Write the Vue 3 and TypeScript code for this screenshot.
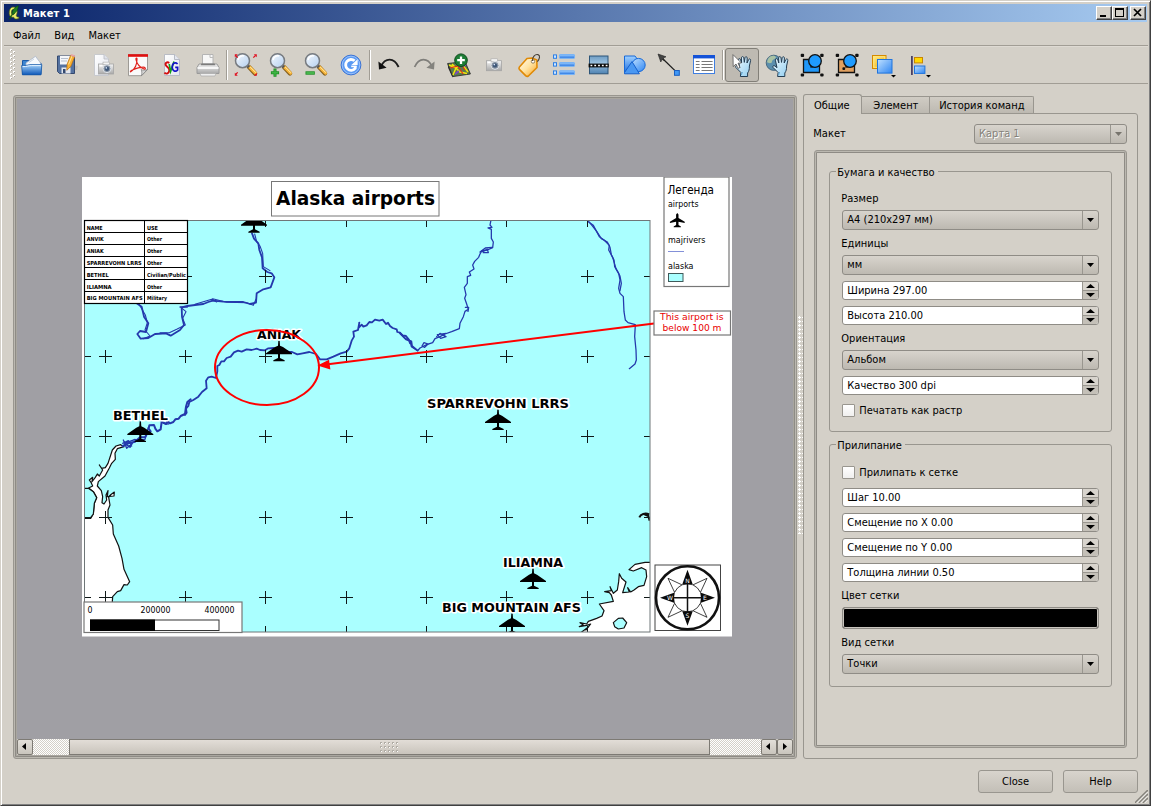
<script setup lang="ts">
interface Plane { x: number; y: number }
interface MapLabel { text: string; x: number; y: number; w: number }

const menus: string[] = ['Файл', 'Вид', 'Макет']

const gridX: number[] = [105.5, 185.5, 265.5, 346.5, 426.5, 506.5, 587.5]
const gridY: number[] = [276.5, 356.5, 436.5, 517.5, 597.5]

const planes: Plane[] = [
  { x: 254, y: 212 },
  { x: 279, y: 340.7 },
  { x: 140.3, y: 421.3 },
  { x: 498, y: 409.3 },
  { x: 533, y: 568.3 },
  { x: 512, y: 613.3 },
]

const mapLabels: MapLabel[] = [
  { text: 'ANIAK', x: 257, y: 339.3, w: 44 },
  { text: 'BETHEL', x: 113, y: 420, w: 55 },
  { text: 'SPARREVOHN LRRS', x: 427, y: 408, w: 142 },
  { text: 'ILIAMNA', x: 503, y: 567, w: 60 },
  { text: 'BIG MOUNTAIN AFS', x: 442, y: 612, w: 139 },
]

const tableLines: number[] = [232.5, 244.5, 256.5, 267.5, 279.5, 291.5]
const tableRows: { name: string; nw: number; use: string; uw: number; y: number }[] = [
  { name: 'NAME', nw: 16, use: 'USE', uw: 11, y: 229.5 },
  { name: 'ANVIK', nw: 17, use: 'Other', uw: 15, y: 241 },
  { name: 'ANIAK', nw: 17, use: 'Other', uw: 15, y: 253 },
  { name: 'SPARREVOHN LRRS', nw: 55, use: 'Other', uw: 15, y: 264.8 },
  { name: 'BETHEL', nw: 22, use: 'Civilian/Public', uw: 39, y: 276.8 },
  { name: 'ILIAMNA', nw: 25, use: 'Other', uw: 15, y: 288.8 },
  { name: 'BIG MOUNTAIN AFS', nw: 56, use: 'Military', uw: 20, y: 300 },
]

const snapFields: string[] = ['Шаг 10.00', 'Смещение по X 0.00', 'Смещение по Y 0.00', 'Толщина линии 0.50']
</script>

<template>
  <div class="window">
    <svg class="defs" width="0" height="0">
      <defs>
        <linearGradient id="gBlue" x1="0" y1="0" x2="0" y2="1"><stop offset="0" stop-color="#9fd0ff" /><stop offset="1" stop-color="#1f6fe0" /></linearGradient>
        <linearGradient id="gBlueD" x1="0" y1="0" x2="1" y2="1"><stop offset="0" stop-color="#bfe0ff" /><stop offset="1" stop-color="#2f86f2" /></linearGradient>
        <linearGradient id="gFolder" x1="0" y1="0" x2="0" y2="1"><stop offset="0" stop-color="#a5d2fa" /><stop offset="1" stop-color="#0d57b8" /></linearGradient>
        <linearGradient id="gPaper" x1="0" y1="0" x2="1" y2="1"><stop offset="0" stop-color="#ffffff" /><stop offset="1" stop-color="#e3e6ee" /></linearGradient>
        <linearGradient id="gGrey" x1="0" y1="0" x2="0" y2="1"><stop offset="0" stop-color="#f4f4f4" /><stop offset="1" stop-color="#a8a8a8" /></linearGradient>
        <linearGradient id="gLens" x1="0" y1="0" x2="1" y2="1"><stop offset="0" stop-color="#f4f9ff" /><stop offset="1" stop-color="#b4cfee" /></linearGradient>
        <linearGradient id="gYellow" x1="0" y1="0" x2="1" y2="1"><stop offset="0" stop-color="#fff08a" /><stop offset="1" stop-color="#f0a400" /></linearGradient>
        <linearGradient id="gTag" x1="0" y1="0" x2="1" y2="1"><stop offset="0" stop-color="#fffdf2" /><stop offset=".5" stop-color="#ffe3a2" /><stop offset="1" stop-color="#f9a21b" /></linearGradient>
        <linearGradient id="gSteel" x1="0" y1="0" x2="0" y2="1"><stop offset="0" stop-color="#6f9dc4" /><stop offset=".4" stop-color="#9ac0de" /><stop offset="1" stop-color="#4f83b2" /></linearGradient>
        <linearGradient id="gHand" x1="0" y1="0" x2="1" y2="1"><stop offset="0" stop-color="#f2fbff" /><stop offset="1" stop-color="#8fcdf0" /></linearGradient>
        <g id="lens">
          <path d="M17 15 L23 21.4" stroke="#8a6320" stroke-width="4.4" stroke-linecap="round" />
          <path d="M17.5 15 L23.4 21" stroke="#f7b53a" stroke-width="3.2" stroke-linecap="round" />
          <path d="M18 14.8 L24 20.8" stroke="#ffe9a8" stroke-width="1" />
          <path d="M14.8 13 L17 15.2" stroke="#555" stroke-width="3" />
          <circle cx="10.5" cy="8.7" r="7" fill="url(#gLens)" stroke="#777b80" stroke-width="1.5" />
          <path d="M6 8 a5 5 0 0 1 6 -4" fill="none" stroke="#fff" stroke-width="1.5" />
        </g>
        <g id="camera">
          <rect x=".5" y="2.5" width="15" height="10" fill="url(#gGrey)" stroke="#a5a5a5" stroke-width=".8" />
          <rect x="5" y=".6" width="6.5" height="2.6" fill="#f4f4f4" stroke="#aaa" stroke-width=".6" />
          <rect x="1.5" y="3.5" width="3" height="1.5" fill="#fff" />
          <circle cx="9" cy="7.2" r="4" fill="#8894a3" stroke="#dfe3e8" stroke-width="1" />
          <circle cx="9" cy="7.2" r="2.2" fill="#3f587a" /><circle cx="8.3" cy="6.4" r=".8" fill="#dceaff" />
        </g>
        <g id="hand">
          <path d="M9 24.5 L9.5 20.5 L4.5 15.5 C3.6 14.2 5.2 13 6.4 14 L8.4 15.7 L6.8 8.2 C6.6 6.4 8.7 6.1 9.2 7.8 L10.2 11 L10 5.8 C10.2 4.2 12.2 4.2 12.4 5.8 L12.9 10.4 L13.6 5.6 C14 4.2 15.8 4.6 15.8 6 L15.6 11 L17.2 7.6 C17.9 6.3 19.6 7 19.2 8.4 L18 14 C18 17.5 17.6 19 16.2 21 V24.5Z" fill="url(#gHand)" stroke="#233c52" stroke-width="1" stroke-linejoin="round" />
          <path d="M10 23 L11 20" stroke="#5fa8d6" stroke-width="1" />
        </g>
        <path id="drop" d="M0 0 H5 L2.5 2.6Z" fill="#000" />
        <g id="handles" fill="#111"><rect x="1.7" y="1.8" width="3.4" height="3.2" rx="1" /><rect x="21.2" y="1.8" width="3.4" height="3.2" rx="1" /><rect x="1.7" y="21.4" width="3.4" height="3.2" rx="1" /><rect x="21.2" y="21.4" width="3.4" height="3.2" rx="1" /></g>
        <path id="plane" d="M-2 0H2L3 15L12 19L39 38V41H3V52L17 59V62H-17V59L-3 52V41H-39V38L-12 19L-3 15Z" transform="scale(.3333)" />
      </defs>
    </svg>

    <header class="titlebar">
      <svg class="logo" width="16" height="16" viewBox="0 0 16 16">
        <path d="M6 2 C1.5 2 .8 12 5 12.3 L6.6 12.2 C7.5 14 9 14.6 11.8 13.6 L12 12 C10.5 12.4 9.8 11.8 9.3 10.5 C11 7 10.5 2 6 2Z M6 4.5 C8 4.5 8 9.8 6 9.8 C4 9.8 4 4.5 6 4.5Z" fill="#e9ee6a" fill-rule="evenodd" stroke="#4b5a12" stroke-width=".7" />
        <path d="M2 14 L5 9 C5 5 8 2 11.5 .6 C10.8 3 11.2 5.5 7.5 8.5 L5.5 9.6 L3 14Z" fill="#1e7d1e" stroke="#0b3f10" stroke-width=".5" />
      </svg>
      <span class="title">Макет 1</span>
      <div class="winbtns">
        <i class="wb"><svg width="13" height="11"><rect x="3" y="8" width="6" height="2" /></svg></i>
        <i class="wb"><svg width="13" height="11"><path d="M2 1H11V10H2ZM3 3V9H10V3Z" fill-rule="evenodd" /></svg></i>
        <i class="wb close"><svg width="13" height="11"><path d="M3 2 L10 9 M10 2 L3 9" stroke="#000" stroke-width="1.7" /></svg></i>
      </div>
    </header>

    <nav class="menubar"><span v-for="m in menus" :key="m">{{ m }}</span></nav>

    <div class="toolbar">
      <svg class="grip" width="8" height="32" viewBox="0 0 8 32">
        <g v-for="n in 8" :key="n"><rect x="0" :y="n * 4 - 4" width="2" height="2" fill="#fff" /><rect x="1" :y="n * 4 - 3" width="1" height="1" fill="#aaa69e" /><rect v-if="n < 8" x="3" :y="n * 4 - 2" width="2" height="2" fill="#fff" /><rect v-if="n < 8" x="4" :y="n * 4 - 1" width="1" height="1" fill="#aaa69e" /></g>
      </svg>
      <div class="tools">
        <i class="tool"><svg viewBox="0 0 26 26">
          <path d="M2.5 8.5 H9 L10.5 11 H21 V22.5 H2.5Z" fill="#3d85d0" stroke="#1b5aa8" />
          <path d="M6 11 L15.5 4.3 L20.5 11 V14 H6Z" fill="#f7f9fc" stroke="#a7b4c6" stroke-width=".8" />
          <path d="M9 10.5 L14 7" stroke="#c9d4e2" />
          <path d="M1.6 13.6 C7 13.8 8 12.6 11 12.6 H21.8 L21 22.8 H2.4Z" fill="url(#gFolder)" stroke="#1b5aa8" stroke-width=".8" />
          <path d="M2.6 14.6 C7 14.8 8.5 13.6 11.3 13.6 H20.8" stroke="#e2f1ff" fill="none" />
        </svg></i>
        <i class="tool"><svg viewBox="0 0 26 26">
          <path d="M17 13 l6 1 -1 4 -5 0z" fill="#b9b4ab" opacity=".6" />
          <path d="M2.5 4 H19.5 V21.5 H4.5 L2.5 19.5Z" fill="#5572a0" stroke="#34496f" />
          <rect x="5" y="4" width="12" height="8.5" fill="#f4f6fa" /><path d="M6 6.5H13M6 9H12" stroke="#b6bfce" />
          <rect x="6.5" y="15.5" width="9" height="6" fill="#e4e7ee" /><rect x="8" y="17" width="2.5" height="4" fill="#34496f" />
          <path d="M12 12.5 L15.6 3.4 L19.6 5 L15.8 14.4 L11.8 18.3Z" fill="#f9b233" stroke="#b76a0a" stroke-width=".7" />
          <path d="M13.6 12.4 L17 4" stroke="#ffe29a" /><path d="M15.5 3.6 L16.3 2 L20.2 3.6 L19.6 5.2Z" fill="#e9a3a3" />
        </svg></i>
        <i class="tool"><svg viewBox="0 0 26 26">
          <path d="M4.5 2.5 H14 L18.5 7 V23.5 H4.5Z" fill="url(#gPaper)" stroke="#c4c6cc" stroke-width=".9" /><path d="M14 2.5 V7 H18.5" fill="#dfe2ea" stroke="#b8bac0" stroke-width=".8" />
          <use href="#camera" x="8" y="9.5" />
        </svg></i>
        <i class="tool"><svg viewBox="0 0 26 26">
          <path d="M3.5 2.5 H22.5 V17.5 L16.5 23.7 H3.5Z" fill="#fafafa" stroke="#9d9a95" />
          <path d="M16.5 23.7 C17 21 17 19 16 17.6 C18.5 18.4 20.5 18.3 22.5 17.5Z" fill="#d4d4d4" stroke="#777" stroke-width=".7" />
          <rect x="3" y="2.2" width="20" height="2.6" fill="#e01010" />
          <path d="M6 19.5 C10 17 12 12 12 7 C12 5.6 10.6 6 11 7.6 C12 12 15 15.4 19 17 C21 17.4 20.6 15.2 18.6 15.2 C14 15.2 10 16.8 6.8 18.2 C5 19 5.2 20.6 6 19.5Z" fill="none" stroke="#e0201a" stroke-width="1.2" />
        </svg></i>
        <i class="tool"><svg viewBox="0 0 26 26">
          <path d="M4.5 2.5 H14.5 L19.5 7.5 V23.5 H4.5Z" fill="url(#gPaper)" stroke="#b3b7c2" stroke-width=".9" /><path d="M14.5 2.5 V7.5 H19.5" fill="#e4e7f0" stroke="#a9adb9" stroke-width=".8" />
          <path d="M9.2 11 C7 9.2 4.6 11.4 6 13.6 C7 15.2 9.6 15.6 9.3 18.4 C9 21.4 6.4 22.6 4.4 20.6" fill="none" stroke="#d40c0c" stroke-width="1.9" />
          <path d="M9.2 12 L10.6 19.5 L14 9.5" fill="none" stroke="#14a01c" stroke-width="1.7" />
          <path d="M17.6 12 C15 9.4 12.2 11.6 12.2 15 C12.2 19 15.6 20.4 17.6 18 V15.4 H15.2" fill="none" stroke="#1414c8" stroke-width="1.7" />
        </svg></i>
        <i class="tool"><svg viewBox="0 0 26 26">
          <path d="M7.5 13 V2.5 H18 V13Z" fill="#f7f7f7" stroke="#b4b4b4" /><path d="M15 2.5 v3 h3" fill="none" stroke="#bbb" />
          <path d="M4 12 H22 L24 15.5 V21.5 H2 V15.5Z" fill="url(#gGrey)" stroke="#9a9a9a" /><path d="M6.5 11.5 H19.5 L20.3 13.2 H5.7Z" fill="#7c7c7c" />
          <path d="M2.5 16 H23.5" stroke="#fff" stroke-width="1.6" /><path d="M5 21.5 H21 L20 24 H6Z" fill="#efefef" stroke="#aaa" stroke-width=".7" />
        </svg></i>
      </div>
      <b class="sep" />
      <div class="tools">
        <i class="tool"><svg viewBox="0 0 26 26"><use href="#lens" /><g stroke="#e01020" fill="#e01020"><path d="M3.5 3.5 l2.2 2.2M23.5 3.5 l-2.2 2.2M3.5 22.5 l2.2-2.2" stroke-width="1.2" /><path d="M2.8 2.2 h3l-3 3zM24.8 2.2 h-3l3 3zM2.8 23.8v-3l3 3zM24.8 23.8v-3l-3 3z" stroke="none" /></g></svg></i>
        <i class="tool"><svg viewBox="0 0 26 26"><use href="#lens" /><path d="M8 16.6 V24.8 M3.9 20.7 H12.1" stroke="#1f8f25" stroke-width="3" /><path d="M8 17.4 V24 M4.7 20.7 H11.3" stroke="#3eb544" stroke-width="1.4" /></svg></i>
        <i class="tool"><svg viewBox="0 0 26 26"><use href="#lens" /><path d="M3.5 21 H12.8" stroke="#1f8f25" stroke-width="3.4" /><path d="M4.3 21 H12" stroke="#4fbf55" stroke-width="1.6" /></svg></i>
        <i class="tool"><svg viewBox="0 0 26 26"><circle cx="14" cy="13" r="9.9" fill="#5b9af3" stroke="#3a72d4" /><circle cx="14" cy="13" r="8.8" fill="none" stroke="#a9ccfb" stroke-width=".8" /><path d="M17.6 8.8 A5.4 5.4 0 1 0 18.2 16.4 V14" fill="none" stroke="#fff" stroke-width="2.8" /><path d="M20.6 7.2 V13 H14.4Z" fill="#fff" /><path d="M14.2 14.4 H19.6" stroke="#fff" stroke-width="1.6" /></svg></i>
      </div>
      <b class="sep wide" />
      <div class="tools">
        <i class="tool"><svg viewBox="0 0 26 26"><path d="M5 14.5 C9 5.5 18 5 22.6 15" fill="none" stroke="#1c1c1c" stroke-width="1.9" /><path d="M2.4 9.6 L3 17.4 L10.6 15.8Z" fill="#111" /></svg></i>
        <i class="tool"><svg viewBox="0 0 26 26"><path d="M21 14.5 C17 5.5 8 5 3.6 15" fill="none" stroke="#7f7e7a" stroke-width="1.7" /><path d="M23.6 9.6 L23 17.4 L15.4 15.8Z" fill="#84837e" /></svg></i>
        <i class="tool"><svg viewBox="0 0 26 26">
          <path d="M1.6 11.5 L19 9.6 L24.4 22 L6.8 24.6Z" fill="#5a7a4e" stroke="#222" stroke-width=".8" /><path d="M6.8 24.6 L1.6 11.5 L2.2 16 L6.5 25.5Z" fill="#222" />
          <path d="M3 13 L10 16 L7 23 M10 16 L16 12 L22 20 M6 12 L14 20 L21 21.5" fill="none" stroke="#f2e60a" stroke-width="1.5" /><path d="M4 16 L12 14 L17 22 M14 10.5 L19 18" fill="none" stroke="#e0301c" stroke-width="1.2" /><path d="M9 22 l4 -3M17 14l3-1" stroke="#7d4bc0" stroke-width="1.6" />
          <circle cx="15" cy="8.2" r="6.3" fill="#1d7d36" stroke="#0c4b1b" /><path d="M15 4.4 V12 M11.2 8.2 H18.8" stroke="#fff" stroke-width="2.3" />
        </svg></i>
        <i class="tool"><svg viewBox="0 0 26 26"><use href="#camera" x="5" y="6.2" /></svg></i>
        <i class="tool"><svg viewBox="0 0 26 26"><path d="M16 6 L20.8 8 L21 15.5 L12.4 24 C11.4 24.6 10.4 24.4 9.6 23.6 L3.4 17.4 C2.8 16.6 2.8 15.8 3.4 15 L11 6.5Z" fill="url(#gTag)" stroke="#e08a06" stroke-width="1.6" stroke-linejoin="round" /><circle cx="17" cy="9.5" r="1.7" fill="#fff" stroke="#7b6540" stroke-width=".8" /><path d="M16.6 9 C16 5 19 2 22 2.6 C24.6 3.4 23.6 7 21.4 9.6" fill="none" stroke="#463f36" stroke-width="1.1" /></svg></i>
        <i class="tool"><svg viewBox="0 0 26 26"><g fill="#cfe6ff" stroke="#2b7fe6"><rect x="2.5" y="2.9" width="3" height="3.4" /><rect x="2.5" y="10.7" width="3" height="3.4" /><rect x="2.5" y="18.9" width="3" height="3.4" /><rect x="8.5" y="2.5" width="15" height="3.8" rx=".6" fill="url(#gBlue)" stroke="#79b4f6" /><rect x="8.5" y="10.5" width="15" height="3.8" rx=".6" fill="url(#gBlue)" stroke="#79b4f6" /><rect x="8.5" y="18.7" width="15" height="3.8" rx=".6" fill="url(#gBlue)" stroke="#79b4f6" /></g></svg></i>
        <i class="tool"><svg viewBox="0 0 26 26"><rect x="3.5" y="4" width="18.5" height="17.8" fill="url(#gSteel)" stroke="#2d5578" /><rect x="2.6" y="11.6" width="20.2" height="3.8" fill="#0b0b0b" /><path d="M4.5 13.5 H22" stroke="#fff" stroke-width="1.6" stroke-dasharray="1.8 2" /></svg></i>
        <i class="tool"><svg viewBox="0 0 26 26"><path d="M3.5 4 H14 L20 12 V12 L17 20.5 H3.5Z" fill="url(#gBlue)" stroke="#1769d8" /><circle cx="17.6" cy="13" r="6.6" fill="url(#gBlueD)" stroke="#1769d8" /><path d="M3.5 20.5 L11 9.6 L18.4 21.8 H3.5Z" fill="#4a98f2" stroke="#1560cc" stroke-linejoin="round" /></svg></i>
        <i class="tool"><svg viewBox="0 0 26 26"><path d="M5.5 5.5 L20 19.6" stroke="#1c1c1c" stroke-width="1.3" /><path d="M2 2 L10 4.8 L7.2 6 L8 8.4 L5.9 7.4 L4.8 10Z" fill="#444" stroke="#222" stroke-width=".6" /><rect x="18.5" y="18.5" width="4.8" height="4.8" fill="#3f97f5" stroke="#1a5fc0" /></svg></i>
        <i class="tool"><svg viewBox="0 0 26 26"><rect x="2.5" y="3.5" width="21" height="18" fill="#fff" stroke="#3f7ee0" /><rect x="2" y="3" width="22" height="3.4" fill="#1452d8" /><path d="M4.8 9.5H8.6M4.8 12.5H8.6M4.8 15.5H8.6M4.8 18.5H8.6M10.5 9.5H21.6M10.5 12.5H21.6M10.5 15.5H21.6M10.5 18.5H21.6" stroke="#787878" /></svg></i>
      </div>
      <b class="sep last" />
      <div class="tools">
        <i class="tool active"><svg viewBox="0 0 26 26"><use href="#hand" x="2.4" /><path d="M4 2.6 L4.2 14.6 L7 12 L9 16.4 L11 15.4 L9 11.2 L12.4 11Z" fill="#fff" stroke="#555" stroke-width=".8" /></svg></i>
        <i class="tool"><svg viewBox="0 0 26 26"><circle cx="9.8" cy="10.8" r="7.6" fill="#5b8fae" stroke="#4a6a80" /><path d="M4 7 C6 3.6 10 3 12 5 C11 8 8 7 8 10 C7 12 4 11 3 10Z M13 12 l4 -4 v6z" fill="#a9c2a4" /><use href="#hand" x="4.6" /></svg></i>
        <i class="tool"><svg viewBox="0 0 26 26"><path d="M4.5 7.5 H12 V15 L20.5 14 V20.5 H4.5Z" fill="#1f97f8" stroke="#111" stroke-width="1.3" /><circle cx="16" cy="9" r="6.3" fill="#1f9bff" stroke="#111" stroke-width="1.3" /><use href="#handles" /></svg></i>
        <i class="tool"><svg viewBox="0 0 26 26"><path d="M4.5 7.5 H12 V15 L20.5 14 V20.5 H4.5Z" fill="#e0a060" stroke="#111" stroke-width="1.3" /><circle cx="16" cy="9" r="6.3" fill="#1f9bff" stroke="#111" stroke-width="1.3" /><rect x="8.4" y="15.2" width="2.8" height="2.8" rx="1" fill="#111" /><use href="#handles" /></svg></i>
        <i class="tool"><svg viewBox="0 0 26 26"><rect x="3.5" y="3.5" width="13.5" height="13" fill="url(#gYellow)" stroke="#d48a00" /><rect x="4.8" y="4.8" width="11" height="10.5" fill="none" stroke="#ffe680" /><rect x="8.5" y="7.5" width="14.5" height="13.6" fill="url(#gBlueD)" stroke="#1f74dd" /><use href="#drop" x="22" y="23" /></svg></i>
        <i class="tool"><svg viewBox="0 0 26 26"><rect x="7" y="4" width="1.8" height="19" fill="#4a4063" /><rect x="10.5" y="5.5" width="8" height="5.4" fill="#ffd800" stroke="#c98500" /><rect x="10.5" y="14" width="10.4" height="7.4" fill="url(#gBlueD)" stroke="#1f74dd" /><use href="#drop" x="22" y="23" /></svg></i>
      </div>
    </div>

    <main class="body">
      <section class="canvas">
        <div class="viewport">
          <svg class="paper" width="651" height="460" viewBox="82 177 651 460">
            <defs>
              <clipPath id="mapClip"><rect x="85" y="221" width="565" height="411" /></clipPath>
            </defs>
            <rect x="82" y="177" width="650" height="459.5" fill="#fff" />
            <g clip-path="url(#mapClip)">
              <rect x="85" y="221" width="565" height="411" fill="#aff" />

              <g transform="translate(80 400) scale(.33333)" fill="#fff" stroke="#111" stroke-width="3.6" stroke-linejoin="round">
                <path d="M38 258 L33 247 L28 240 L38 232 L36 245 L46 232 L52 222 L58 228 L68 210 L58 195 L65 205 L76 203 L84 190 L97 150 L108 138 L122 134 L132 140 L112 146 L105 160 L106 178 L95 190 L88 204 L75 228 L55 245 L52 258 L64 272 L68 290 L66 308 L72 312 L80 300 L78 285 L84 272 L82 290 L102 288 L103 276 L92 284 L86 292 L90 315 L84 330 L84 352 L98 375 L100 402 L116 438 L126 475 L132 508 L149 545 L142 555 L132 554 L122 572 L112 575 L98 590 L96 620 L0 620 V355 H32 L40 342 L43 310 L50 293 L40 275 L26 264Z" />
                <path d="M0 355 H30 L40 342 L43 310 L50 293 L40 275 L25 265 L10 265 L0 255Z" fill="#aff" />
              </g>
              <g transform="translate(400 400) scale(.33333)" fill="#fff" stroke="#111" stroke-width="3.6" stroke-linejoin="round">
                <path d="M1060 486 L735 487 L705 493 L687 509 L700 513 L725 503 L738 510 L740 530 L732 556 L715 560 L702 570 L692 576 L683 563 L688 576 L668 578 L678 546 L665 535 L658 521 L656 545 L652 570 L640 580 L630 560 L634 572 L614 575 L628 578 L634 585 L640 604 L598 612 L612 632 L606 648 L590 655 L565 664 L560 672 L540 668 L550 675 L538 680 L560 676 L572 672 L558 690 L566 680 L540 700 H1060Z" />
                <path d="M640 668 L655 655 L668 654 L680 668 L672 684 L655 687 L644 680Z" fill="#aff" />
                <path d="M718 352 C722 342 735 338 748 343 M732 342 L745 348 L749 362" fill="none" stroke-width="6" />
              </g>

              <g fill="none" stroke="#2438ac" stroke-linejoin="round" stroke-linecap="round">
                <g transform="translate(80 170) scale(.33333)" stroke-width="5.4">
                  <path d="M516 190 L522 206 L535 220 L538 240 L546 262 L548 295 L562 306 L575 310 L583 322 L572 352 L550 358 L530 370 L528 398 L510 402 L490 396 L430 395 L398 392 L385 396 L370 402 L345 405 L322 408 L305 412 L306 440 L312 465 L300 480 L272 497 L258 490 L225 492 L205 504 L182 506 L172 492 L180 483 L198 486 L205 460 L192 440 L185 410 L170 400" />
                  <path d="M524 192 L530 215 L540 228 L548 250 L550 290 L570 302 M398 386 L440 397 L500 398 L520 406 L528 388 M300 412 L322 412 L300 410 L318 425 L308 445 L316 465 L290 478 L268 488 L240 488 M178 404 L196 435 L202 458 L195 480 L210 498 L190 506 M345 403 L395 388 L410 396" stroke-width="3.2" />
                  <path d="M990 520 L986 508 L978 498 L968 496 L960 488 L952 486 L950 478 L938 474 L930 468 L924 458 L918 462 L908 449 L898 452 L885 449 L876 457 L868 456 L860 466 L850 470 L845 464 L835 474 L838 458 L834 480 L820 485 L822 500 L815 512 L808 535 L800 545 L782 550 L760 560 L740 568 L720 568 L708 552 L688 546 L668 550 L652 553 L636 546 L625 545 L608 540 L590 540 L582 534 L565 535 L555 541 L540 540 L530 536 L515 540 L500 538 L485 545 L474 542 L462 547 L452 560 L440 564 L432 574 L424 574 L418 585 L412 588 L412 604 L408 624 L395 620 L385 622 L378 632 L380 655 L366 666 L355 680 L340 690 L328 696 L325 708 L318 716 L320 728 L315 735" />
                </g>
                <g transform="translate(80 400) scale(.33333)" stroke-width="6">
                  <path d="M332 -2 L322 6 L318 20 L315 42 L302 48 L296 56 L286 58 L280 66 L270 70 L262 64 L258 72 L245 65 L242 88 L232 94 L226 86 L222 75 L208 76 L206 86 L212 94 L202 100 L195 112 L180 112 L165 125 L145 130 L128 138" />
                  <path d="M130 120 L140 145 L158 128 L150 142 L134 130 L165 118 M128 130 L145 122 L155 138 M160 120 L195 118 L205 82 M250 70 L265 72" stroke-width="4" />
                </g>
                <g transform="translate(400 170) scale(.33333)" stroke-width="3.8">
                  <path d="M273 150 L270 165 L276 172 L264 174 L274 178 L274 205 L280 216 L278 233 L262 240 L246 242 L240 252 L236 262 L224 274 L218 285 L222 297 L208 306 L212 316 L202 320 L202 340 L193 352 L198 374 L194 385 L200 402 L205 418 L195 424 L190 440 L180 460 L178 476 L155 485 L135 492 L120 500 L105 506 L98 518 L80 524 L60 534 L53 542 L34 530 L30 512 L15 505 L0 488" />
                  <path d="M248 245 L262 238 L265 248 L250 248 M110 500 L120 490 L138 500 L122 505 L112 494 L138 490 M66 528 L72 518 L84 522 L74 532Z M196 412 L206 412 L204 424 M276 232 L256 234 L240 246" />
                  <path d="M53 542 L36 528 L34 514 L18 508 L0 490" stroke-width="5.4" />
                  <path d="M562 150 L574 164 L590 184 L604 206 L622 216 L630 232 L634 254 L642 270 L644 290 L656 310 L660 330 L656 355 L660 370 L670 380 L672 425 L676 450 L684 458 L706 464 L704 500 L708 540 L709 570 L705 582 L688 596" />
                  <path d="M566 156 L580 166 L598 200 L612 210 L628 226 L626 240 L638 262 L648 296 L660 318 L664 340 L660 362" />
                </g>
              </g>

              <g stroke="#101818" stroke-width="1" shape-rendering="crispEdges">
                <template v-for="gx in gridX" :key="'x' + gx">
                  <path v-for="gy in gridY" :key="gy" :d="`M${gx - 6.5} ${gy}h13M${gx} ${gy - 6.5}v13`" />
                  <path :d="`M${gx} 221v6M${gx} 626v7`" />
                </template>
                <path v-for="gy in gridY" :key="'y' + gy" :d="`M85 ${gy}h6M643.5 ${gy}h7`" />
              </g>
              <use v-for="(p, i) in planes" :key="i" href="#plane" :transform="`translate(${p.x} ${p.y})`" />
            </g>
            <rect x="84.5" y="220.5" width="565.5" height="411.5" fill="none" stroke="#6f7678" />

            <g class="maplabel">
              <text v-for="l in mapLabels" :key="l.text" :x="l.x" :y="l.y" :textLength="l.w" lengthAdjust="spacingAndGlyphs">{{ l.text }}</text>
            </g>

            <g fill="none" stroke="#f00" stroke-width="2">
              <ellipse cx="267" cy="367.5" rx="52" ry="37.5" />
              <path d="M326 364.5 L654 323.5" />
            </g>
            <path d="M317.5 365.5 L329 359.8 L330.4 369.6Z" fill="#f00" />

            <rect x="271.5" y="181.5" width="167.5" height="34.5" fill="#fff" stroke="#777" />
            <text class="sans title-text" x="276" y="204.5" textLength="159" lengthAdjust="spacingAndGlyphs">Alaska airports</text>

            <g>
              <rect x="84.5" y="220.5" width="103" height="83" fill="#fff" stroke="#000" stroke-width="1.2" />
              <path v-for="ly in tableLines" :key="ly" :d="`M84 ${ly}H188`" stroke="#000" />
              <path d="M144.5 220V304" stroke="#000" />
              <g class="tiny">
                <template v-for="r in tableRows" :key="r.name">
                  <text x="86.7" :y="r.y" :textLength="r.nw" lengthAdjust="spacingAndGlyphs">{{ r.name }}</text>
                  <text x="147" :y="r.y" :textLength="r.uw" lengthAdjust="spacingAndGlyphs">{{ r.use }}</text>
                </template>
              </g>
            </g>

            <g class="sans">
              <rect x="664" y="177" width="65" height="109.5" fill="#fff" stroke="#777" stroke-width="1.2" />
              <text x="667.5" y="194" font-size="12" textLength="46.5" lengthAdjust="spacingAndGlyphs">Легенда</text>
              <text x="668" y="207" font-size="9" textLength="30.5" lengthAdjust="spacingAndGlyphs">airports</text>
              <path d="M0 -7.4 L1.2 -6 V-2.4 L7.4 1.2 V2.6 L1.2 1.2 V4.6 L3.6 6 V6.8 H-3.6 V6 L-1.2 4.6 V1.2 L-7.4 2.6 V1.2 L-1.2 -2.4 V-6Z" transform="translate(677.3 220.5)" />
              <text x="668" y="243" font-size="9" textLength="37.5" lengthAdjust="spacingAndGlyphs">majrivers</text>
              <path d="M668 251.5H684" stroke="#8390d8" />
              <text x="668" y="269" font-size="9" textLength="25.5" lengthAdjust="spacingAndGlyphs">alaska</text>
              <rect x="668.5" y="273.5" width="14.5" height="8" fill="#aff" stroke="#405a5a" />
            </g>

            <g class="sans" fill="#e80000">
              <rect x="654" y="311" width="76.5" height="24" fill="#fff" stroke="#777" stroke-width="1.2" />
              <text x="660" y="320" font-size="9" textLength="63.5" lengthAdjust="spacingAndGlyphs">This airport is</text>
              <text x="662.5" y="331" font-size="9" textLength="59" lengthAdjust="spacingAndGlyphs">below 100 m</text>
            </g>

            <g class="sans">
              <rect x="84" y="602" width="158" height="30.5" fill="#fff" stroke="#777" stroke-width="1.2" />
              <text x="87.5" y="613" font-size="9" textLength="5" lengthAdjust="spacingAndGlyphs">0</text>
              <text x="140.5" y="613" font-size="9" textLength="30" lengthAdjust="spacingAndGlyphs">200000</text>
              <text x="204.5" y="613" font-size="9" textLength="30" lengthAdjust="spacingAndGlyphs">400000</text>
              <rect x="90.5" y="620" width="128.5" height="10.5" fill="#fff" stroke="#333" />
              <rect x="90" y="619.5" width="65" height="11.5" />
            </g>

            <g>
              <rect x="655" y="565" width="65.5" height="65.5" fill="#fff" stroke="#444" />
              <g transform="translate(687.5 597.8)" fill="#fff" stroke="#111">
                <circle r="31.5" stroke-width="2.6" />
                <path d="M-19.5 -19.5 L-5.6 -13 L-13 -5.6Z M19.5 -19.5 L5.6 -13 L13 -5.6Z M-19.5 19.5 L-5.6 13 L-13 5.6Z M19.5 19.5 L5.6 13 L13 5.6Z" stroke-width=".8" />
                <circle r="14" stroke-width=".8" />
                <path d="M0 -28 L5.2 -13.5 H-5.2Z M0 28 L5.2 13.5 H-5.2Z M-27.5 0 L-13.5 -5 V5Z M27.5 0 L13.5 -5 V5Z" fill="#0a0a0a" stroke="none" />
                <path d="M0 -15V15M-15 0H15" stroke-width="1.5" />
                <g class="rose"><text x="0" y="-14.8">N</text><text x="0" y="20.6">S</text><text x="-17.5" y="2.6">W</text><text x="17.5" y="2.6">E</text></g>
              </g>
            </g>
          </svg>
        </div>
        <div class="hscroll">
          <i class="sb"><svg width="16" height="16"><path d="M5 7.5 L9 4 V11Z" /></svg></i>
          <i class="track first" /><i class="thumb"><svg width="19" height="11"><g v-for="r in 3" :key="r"><g v-for="c in 5" :key="c"><rect :x="c * 4 - 4" :y="r * 4 - 4" width="2" height="2" fill="#b0aca4" /><rect :x="c * 4 - 3" :y="r * 4 - 3" width="1" height="1" fill="#fff" /></g></g></svg></i><i class="track second" />
          <i class="sb"><svg width="16" height="16"><path d="M5 7.5 L9 4 V11Z" /></svg></i>
          <i class="sb"><svg width="16" height="16"><path d="M10 7.5 L6 4 V11Z" /></svg></i>
        </div>
      </section>
      <div class="splitter" />
      <aside class="side">
        <div class="tabs"><span class="tab on">Общие</span><span class="tab t2">Элемент</span><span class="tab t3">История команд</span></div>
        <div class="pane">
          <div class="row"><label>Макет</label>
            <div class="combo disabled"><span>Карта 1</span><i><svg width="7" height="4"><path d="M0 0H7L3.5 4Z" /></svg></i></div>
          </div>
          <div class="scrollarea">
            <fieldset class="group g1">
              <span class="legend">Бумага и качество</span>
              <label class="lb">Размер</label>
              <div class="combo"><span class="size">A4 (210x297 мм)</span><i><svg width="7" height="4"><path d="M0 0H7L3.5 4Z" /></svg></i></div>
              <label class="lb">Единицы</label>
              <div class="combo"><span>мм</span><i><svg width="7" height="4"><path d="M0 0H7L3.5 4Z" /></svg></i></div>
              <div v-for="t in ['Ширина 297.00', 'Высота 210.00']" :key="t" class="spin"><span>{{ t }}</span><i><svg width="9" height="4"><path d="M0 4H9L4.5 0Z" /></svg><svg width="9" height="4"><path d="M0 0H9L4.5 4Z" /></svg></i></div>
              <label class="lb">Ориентация</label>
              <div class="combo"><span>Альбом</span><i><svg width="7" height="4"><path d="M0 0H7L3.5 4Z" /></svg></i></div>
              <div class="spin"><span>Качество 300 dpi</span><i><svg width="9" height="4"><path d="M0 4H9L4.5 0Z" /></svg><svg width="9" height="4"><path d="M0 0H9L4.5 4Z" /></svg></i></div>
              <div class="check"><i /><span>Печатать как растр</span></div>
            </fieldset>
            <fieldset class="group g2">
              <span class="legend">Прилипание</span>
              <div class="check"><i /><span>Прилипать к сетке</span></div>
              <div v-for="t in snapFields" :key="t" class="spin"><span>{{ t }}</span><i><svg width="9" height="4"><path d="M0 4H9L4.5 0Z" /></svg><svg width="9" height="4"><path d="M0 0H9L4.5 4Z" /></svg></i></div>
              <label class="lb">Цвет сетки</label>
              <div class="color" />
              <label class="lb">Вид сетки</label>
              <div class="combo"><span>Точки</span><i><svg width="7" height="4"><path d="M0 0H7L3.5 4Z" /></svg></i></div>
            </fieldset>
          </div>
        </div>
      </aside>
    </main>

    <footer class="footer">
      <button>Close</button><button>Help</button>
      <svg class="sizegrip" width="13" height="13" viewBox="0 0 13 13"><path d="M0 13L13 0M4 13L13 4M8 13L13 8" stroke="#86837c" stroke-width="1.6" /><path d="M1.6 13L13 1.6M5.6 13L13 5.6M9.6 13L13 9.6" stroke="#fff" stroke-width=".9" /></svg>
    </footer>
  </div>
</template>

<style>
html, body { margin: 0; background: #d4d0c8; overflow: hidden; }
</style>

<style scoped>
* { box-sizing: border-box; }
i { font-style: normal; display: block; }
svg { display: block; }
.window {
  width: 1151px; height: 806px; background: #d4d0c8; color: #000;
  border: 1px solid; border-color: #d4d0c8 #404040 #404040 #d4d0c8;
  box-shadow: inset 1px 1px #fff, inset -1px -1px #808080;
  padding: 3px 2px 2px 3px;
  font: 11px/14px "DejaVu Sans Condensed", "DejaVu Sans", sans-serif; font-stretch: condensed;
  display: flex; flex-direction: column; overflow: hidden;
}
.defs { position: absolute; }
.titlebar { height: 18px; flex: none; display: flex; align-items: center; background: linear-gradient(90deg, #0a246a, #a6caf0); padding: 0 1px 0 3px; margin-right: 1px; }
.title { color: #fff; font-weight: bold; flex: 1; letter-spacing: .15px; padding-top: 1px; }
.winbtns { display: flex; }
.wb { width: 16px; height: 14px; background: #d4d0c8; border: 1px solid; border-color: #fff #404040 #404040 #fff; box-shadow: inset -1px -1px #808080; }
.wb.close { margin-left: 2px; }
.menubar { height: 24px; flex: none; border-bottom: 1px solid #a19d95; display: flex; align-items: center; padding: 4px 0 0 9px; gap: 14px; }
.toolbar { height: 38px; flex: none; border-top: 1px solid #dedad3; border-bottom: 1px solid #a19d95; display: flex; align-items: center; padding-left: 6px; }
.grip { margin-right: -2px; }
.tools { display: flex; }
.tool { width: 35px; height: 34px; padding: 4px 0 0 4px; }
.tool svg { width: 26px; height: 26px; overflow: visible; }
.tool.active { width: 34px; margin-right: 1px; padding: 3px 0 0 3px; border: 1px solid #827f78; border-radius: 3px; background: #bebab2; }
.sep { width: 2px; height: 30px; background: linear-gradient(90deg, #a19d95 50%, #fff 50%); }
.sep.wide { margin: 0 1px; }
.sep.last { margin-right: 1px; }

.body { display: flex; margin: 11px 10px 0 9px; height: 664px; flex: none; }
.canvas { width: 785px; height: 664px; border: 1px solid #99968f; border-radius: 3px; box-shadow: inset 0 0 0 1px #bbb8b0, inset 0 0 0 2px #8e8b85, inset 0 0 0 3px #a9a69f; padding: 3px; display: flex; flex-direction: column; }
.viewport { flex: 1; background: #a09fa4; padding: 78px 0 0 65px; }
.hscroll { height: 16px; display: flex; background: #d4d0c8; }
.sb { width: 16px; height: 16px; border: 1px solid #7d7a74; border-radius: 2px; background: linear-gradient(#e2dfd9, #c9c5bd); }
.sb svg { margin: -1px; }
.track { background: repeating-conic-gradient(#fff 0 25%, #d4d0c8 0 50%) 0 0 / 2px 2px; height: 16px; }
.first { width: 36px; }
.second { flex: 1; }
.thumb { width: 641px; height: 16px; border: 1px solid #7d7a74; background: linear-gradient(#e2ddd7, #c9c4bc); display: flex; align-items: center; justify-content: center; }
.splitter { width: 6px; height: 218px; margin-top: 221px; background: radial-gradient(circle at 1.5px 1.5px, #fff 1.2px, transparent 1.3px) 1px 0 / 4px 4px; }

.side { width: 335px; }
.tabs { display: flex; height: 19px; align-items: flex-end; margin-top: -1px; }
.tab { height: 17px; border: 1px solid #99968f; border-left: 0; border-bottom: 0; background: linear-gradient(#d0ccc4, #bdb9b1); text-align: center; line-height: 18px; }
.tab.on { position: relative; width: 59px; height: 20px; margin-bottom: -1px; line-height: 21px; border-left: 1px solid #99968f; border-radius: 3px 3px 0 0; background: #d4d0c8; padding-right: 2px; }
.t2 { width: 68px; }
.t3 { width: 104px; border-radius: 0 2px 0 0; }
.pane { height: 646px; border: 1px solid #99968f; border-radius: 0 3px 3px 3px; padding: 10px 10px 0; }
.row { display: flex; justify-content: space-between; align-items: center; height: 20px; }
.row label { margin-left: -1px; }
.row .combo { width: 153px; }
.combo { height: 20px; border: 1px solid #8f8c86; border-radius: 3px; background: linear-gradient(#d8d4cd, #bdb9b1); display: flex; align-items: center; padding-left: 4px; }
.combo span { flex: 1; }
.combo i { width: 16px; height: 18px; border-left: 1px solid #99968f; display: flex; align-items: center; justify-content: center; }
.disabled { color: #85827b; text-shadow: 1px 1px #fff; }
.disabled svg { fill: #77746d; }
.scrollarea { height: 598px; margin: 6px 0 0 0; border: 1px solid #99968f; border-radius: 3px; box-shadow: inset 0 0 0 1px #bbb8b0, inset 0 0 0 2px #8e8b85; padding: 20px 14px 0; }
.group { position: relative; margin: 0; min-width: 0; border: 1px solid #99968f; border-radius: 3px; padding: 0 12px; display: flex; flex-direction: column; }
.g1 { height: 261px; padding-top: 17px; }
.g2 { height: 243px; margin-top: 12px; padding-top: 21px; }
.legend { position: absolute; left: 6px; top: -7px; background: #d4d0c8; padding: 0 3px 0 1px; line-height: 15px; }
.lb { height: 25px; line-height: 19px; margin-left: -1px; }
.g1 .lb:nth-of-type(1) { height: 21px; }
.group .combo, .spin, .color { flex: none; }
.spin { height: 19px; border: 1px solid #8f8c86; border-radius: 3px; background: #fff; display: flex; align-items: center; padding-left: 4px; margin-top: 6px; }
.spin span { flex: 1; padding-top: 1px; }
.spin i { width: 16px; height: 17px; border-left: 1px solid #99968f; border-radius: 0 2px 2px 0; background: linear-gradient(#d8d4cd 0 45%, #99968f 45% 52%, #c4c0b8 52%); display: flex; flex-direction: column; align-items: center; justify-content: space-between; padding: 2px 0; }
.check { display: flex; align-items: center; height: 13px; gap: 4px; margin-top: 8px; }
.g1 .check { margin-top: 9px; }
.check i { width: 13px; height: 13px; border: 1px solid #99968f; border-radius: 1px; background: linear-gradient(#fff, #f0efee); }
.g1 .combo + .lb, .spin + .lb, .color + .lb { padding-top: 4px; height: 25px; }
.g2 .check { margin-top: 0; margin-bottom: 3px; }
.color { height: 22px; border: 1px solid #8f8c86; border-radius: 3px; background: #000; box-shadow: inset 0 0 0 1px #c9c5be; }

.footer { display: flex; justify-content: flex-end; gap: 10px; padding: 11px 10px 0 0; position: relative; height: 44px; }
.footer button { width: 75px; height: 23px; border: 1px solid #99968f; border-radius: 3px; background: linear-gradient(#d8d4cd, #c3bfb7); font: inherit; padding: 0; }
.sizegrip { position: absolute; right: 0; bottom: 0; }

.sans { font-family: "DejaVu Sans", sans-serif; font-stretch: normal; }
.title-text { font-size: 19px; font-weight: bold; }
.maplabel { font: 12px "DejaVu Sans", sans-serif; }
.maplabel text { font-weight: bold; paint-order: stroke; stroke: #fff; stroke-width: 3px; stroke-linejoin: round; }
.tiny { font: bold 5.5px "DejaVu Sans", sans-serif; }
.rose { font: 6px "DejaVu Sans", sans-serif; text-anchor: middle; stroke: none; fill: #fff; }
</style>
